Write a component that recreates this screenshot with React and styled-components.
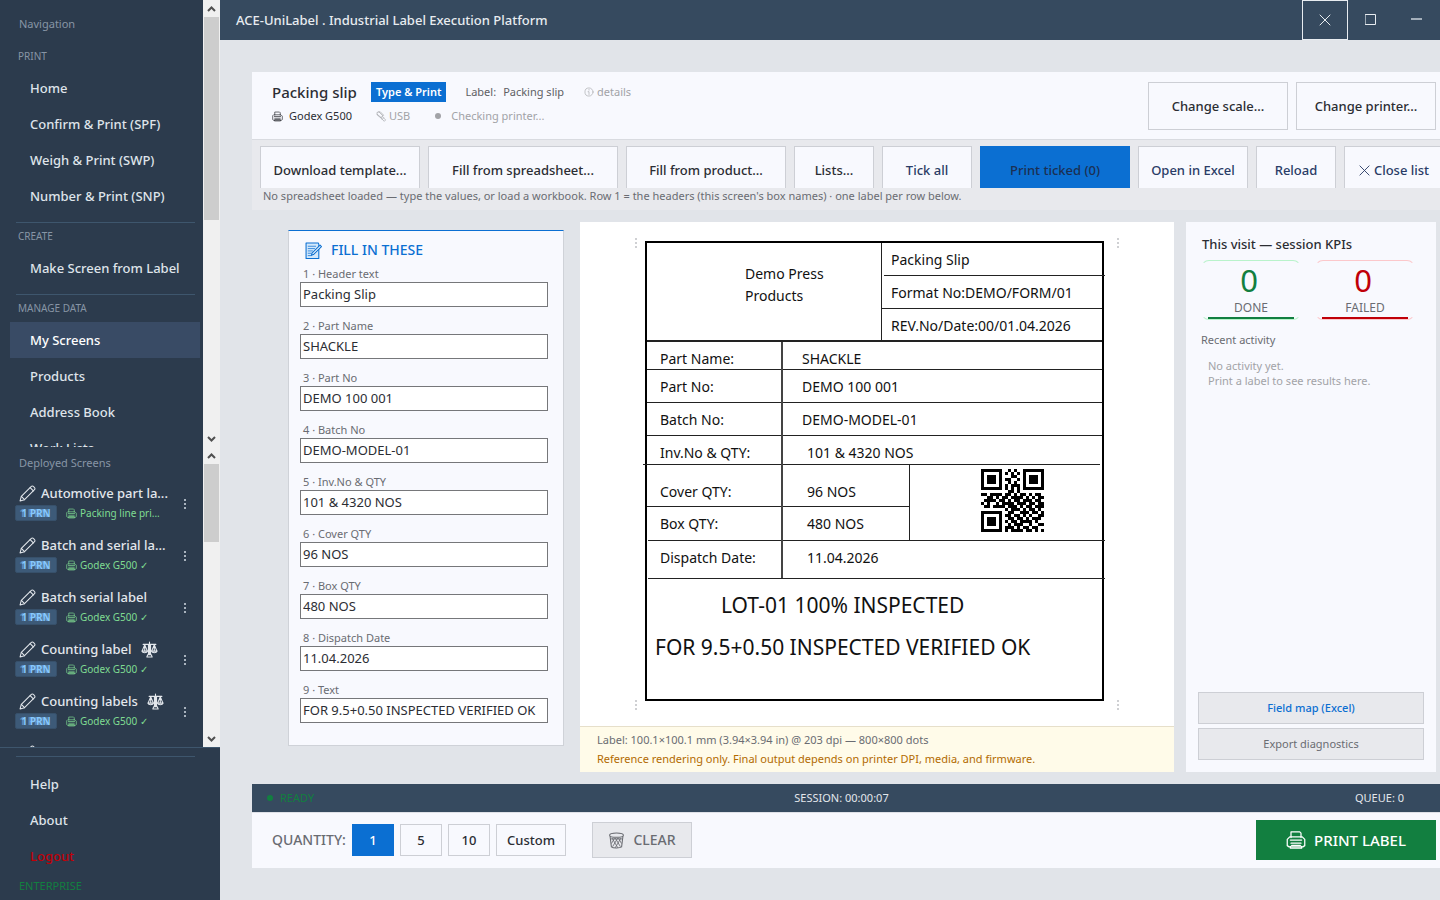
import React from "react";
import styled, { createGlobalStyle, css } from "styled-components";

const GlobalStyle = createGlobalStyle`
  * {
    box-sizing: border-box;
  }
  body {
    margin: 0;
    background: #e1e4e9;
    color: #2b2d33;
    font-family: "Noto Sans", "Open Sans", sans-serif;
    font-size: 11px;
    line-height: 16px;
  }
  button, input {
    font: inherit;
    color: inherit;
    margin: 0;
  }
  svg {
    display: block;
    flex: none;
  }
`

const Screen = styled.div`
  display: flex;
  height: 100vh;
  overflow: hidden;
`

/* ---------- sidebar ---------- */
const Sidebar = styled.aside`
  display: flex;
  flex-direction: column;
  flex: none;
  width: 220px;
  background: #2c3b4d;
  color: #e3e7ec;
`
const ScrollArea = styled.div`
  display: flex;
  min-height: 0;
  flex: ${props => props.$height ? `0 0 ${props.$height}` : "1 1 0"};
`
const ScrollContent = styled.div`
  flex: 1;
  min-width: 0;
  overflow: hidden;
`
const Track = styled.div`
  display: flex;
  flex-direction: column;
  flex: none;
  width: 17px;
  padding: 0 1px;
  background: #f0f0f0;
  color: #505050;
  svg {
    margin: 0 auto;
  }
`
const Thumb = styled.div`
  flex: 0 0 ${props => props.$size};
  background: #cdcdcd;
`
const TrackSpace = styled.div`
  flex: 1;
`
const PaneTitle = styled.div`
  padding: ${props => props.$first ? "16px 19px 16px" : "8px 19px 4px"};
  color: #8795a5;
`
const GroupTitle = styled.div`
  padding: 0 18px 6px;
  font-size: 10px;
  color: #8795a5;
`
const Divider = styled.hr`
  height: 1px;
  margin: ${props => props.$bottom ? "8px 25px 9px 16px" : "8px 8px 5px 16px"};
  border: 0;
  background: #3e566d;
`
const NavLink = styled.a`
  display: block;
  height: 36px;
  margin: 0 3px 0 10px;
  padding: 0 20px;
  line-height: 36px;
  font-size: 13px;
  font-weight: 500;
  white-space: nowrap;
  text-decoration: none;
  color: ${props => props.$danger ? "#c00008" : props.$active ? "#ffffff" : "#dfe4ea"};
  background: ${props => props.$active ? "#394b65" : "transparent"};
`
const SideFooter = styled.div`
  flex: none;
  height: 153px;
  border-top: 1px solid #3e566d;
`
const Edition = styled.div`
  padding: 4px 19px;
  color: #127f40;
`
const Deployed = styled.div`
  display: flex;
  align-items: flex-start;
  height: 52px;
  padding: 6px 8px 0 15px;
`
const DeployedMain = styled.div`
  flex: 1;
  min-width: 0;
`
const DeployedName = styled.div`
  display: flex;
  align-items: center;
  gap: 5px;
  height: 24px;
  padding-left: 4px;
  font-size: 13px;
  font-weight: 500;
  white-space: nowrap;
  svg:last-child:not(:first-child) {
    margin-left: 4px;
  }
`
const DeployedMeta = styled.div`
  display: flex;
  align-items: center;
  gap: 9px;
  font-size: 10px;
  color: #7fdb92;
  white-space: nowrap;
`
const Prn = styled.span`
  width: 42px;
  height: 16px;
  border: 1px solid #37506a;
  border-radius: 2px;
  background: #3d5a78;
  color: #86c8ff;
  font-weight: 700;
  line-height: 14px;
  text-align: center;
  text-shadow: -2px 0 rgba(134, 200, 255, 0.5);
`
const MetaPrinter = styled.span`
  display: flex;
  align-items: center;
  gap: 3px;
`
const MoreButton = styled.button`
  display: flex;
  margin-top: 13px;
  padding: 4px;
  border: 0;
  background: none;
  color: #a9b3be;
`

/* ---------- main ---------- */
const Main = styled.main`
  display: flex;
  flex-direction: column;
  flex: 1;
  min-width: 0;
`
const TitleBar = styled.header`
  display: flex;
  align-items: center;
  flex: none;
  height: 40px;
  padding-left: 16px;
  background: #364a5f;
  color: #e8ecf0;
  h1 {
    flex: 1;
    margin: 0;
    font-size: 13px;
    font-weight: 500;
  }
`
const WindowButton = styled.button`
  display: flex;
  align-items: center;
  justify-content: center;
  width: 46px;
  height: 40px;
  padding: 0;
  border: 1px solid ${props => props.$focused ? "#e8ecf0" : "transparent"};
  background: none;
`
const Work = styled.div`
  display: flex;
  flex-direction: column;
  flex: 1;
  min-height: 0;
  padding: 32px 0 32px 32px;
`
const ScreenHead = styled.section`
  display: flex;
  align-items: flex-start;
  justify-content: space-between;
  height: 68px;
  padding: 10px 4px 0 20px;
  border-bottom: 1px solid #d9dbe0;
  background: #f8f9fe;
`
const HeadRow = styled.div`
  display: flex;
  align-items: center;
  height: ${props => props.$tall ? "20px" : "28px"};
  color: #5e6064;
  h2 {
    width: 99px;
    margin: 0;
    font-size: 15px;
    font-weight: 500;
    color: #2b2d33;
    white-space: nowrap;
  }
`
const Tag = styled.span`
  height: 20px;
  padding: 0 5px;
  line-height: 20px;
  font-weight: 600;
  background: #0b6fd2;
  color: #ffffff;
`
const HeadText = styled.span`
  display: flex;
  align-items: center;
  gap: ${props => props.$gap || "4px"};
  margin-left: ${props => props.$left || "0"};
  color: ${props => props.$tone || "inherit"};
`
const Buttons = styled.div`
  display: flex;
  gap: ${props => props.$gap || "8px"};
`
const Button = styled.button`
  display: flex;
  align-items: center;
  justify-content: center;
  gap: ${props => props.$gap || "8px"};
  flex: none;
  width: ${props => props.$width};
  height: ${props => props.$height || "48px"};
  padding: 0;
  border: 1px solid #cdcfd5;
  background: #f8f9fe;
  font-size: 13px;
  font-weight: 500;
  white-space: nowrap;
  ${props => props.$navy && css`
    color: #2a3c66;
  `}
  ${props => props.$primary && css`
    border-color: #0b6fd2;
    background: #0b6fd2;
    color: ${props.$primary};
  `}
  ${props => props.$grey && css`
    background: #e8e9ed;
    color: ${props.$grey};
  `}
  ${props => props.$print && css`
    border-color: #127f40;
    background: #127f40;
    color: #ffffff;
  `}
  ${props => props.$size && css`
    font-size: ${props.$size};
  `}
  ${props => props.$plain && css`
    font-weight: 400;
  `}
`
const SheetBar = styled.section`
  flex: none;
  height: 70px;
  padding: 6px 0 0 8px;
  background: #e8e9ed;
  overflow: hidden;
  p {
    margin: 0 3px;
    color: #6a6c72;
  }
`
const SheetButtons = styled(Buttons)`
  height: 42px;
  overflow: hidden;
`
const Columns = styled.div`
  display: grid;
  grid-template-columns: 276px minmax(0, 1fr) 250px;
  flex: 1;
  min-height: 0;
  padding: 12px 4px 12px 36px;
`
const FormPanel = styled.form`
  align-self: start;
  margin-top: 8px;
  padding: 4px 15px 12px 11px;
  border: 1px solid #cfd2d8;
  border-top-color: #0b6fd2;
  background: #f8f9fe;
  h3 {
    display: flex;
    align-items: center;
    gap: 9px;
    height: 30px;
    margin: 0 0 0 5px;
    font-size: 14px;
    font-weight: 500;
    color: #0b6fd2;
  }
`
const Field = styled.div`
  height: 52px;
  label {
    display: block;
    height: 17px;
    padding-left: 3px;
    line-height: 18px;
    color: #6a6c72;
  }
  input {
    display: block;
    width: 100%;
    height: 25px;
    padding: 0 2px 2px;
    border: 1px solid #76777a;
    background: #ffffff;
    color: #2b2d33;
    font-size: 13px;
  }
`
const Preview = styled.section`
  display: flex;
  flex-direction: column;
  margin: 0 12px 0 16px;
  background: #ffffff;
`
const Canvas = styled.div`
  display: grid;
  grid-template-columns: 12px 459px 17px;
  justify-content: center;
  align-content: center;
  flex: 1;
`
const Crop = styled.i`
  width: 2px;
  height: 10px;
  margin: 0 2px;
  align-self: ${props => props.$end ? "end" : "start"};
  justify-self: ${props => props.$right ? "end" : "start"};
  grid-column: ${props => props.$right ? 3 : 1};
  grid-row: 1;
  border-left: 2px dotted #cfd0d3;
`
const Note = styled.div`
  flex: none;
  height: 46px;
  padding: 3px 17px;
  border-top: 1px solid #e6dfca;
  background: #fffbe9;
  line-height: 19px;
  color: #6a6c72;
  div:last-child {
    color: #b26a00;
  }
`

/* ---------- printed label ---------- */
const Label = styled.div`
  grid-column: 2;
  grid-row: 1;
  height: 460px;
  margin: 3px 0 9px;
  border: 2px solid #000000;
  color: #111111;
  font-size: 14px;
  white-space: nowrap;
`
const LabelHead = styled.div`
  display: grid;
  grid-template-columns: 235px 1fr;
  height: 99px;
  border-bottom: 2px solid #222222;
`
const Company = styled.div`
  padding: 20px 0 0 98px;
  border-right: 1px solid #222222;
  line-height: 22px;
`
const HeadLine = styled.div`
  height: 32px;
  padding-left: 9px;
  line-height: 34px;
`
/* some rules of the template run past the frame */
const Rule = styled.div`
  height: 1px;
  margin: ${props => props.$margin || "0"};
  background: #222222;
`
const LabelRow = styled.div`
  display: grid;
  grid-template-columns: 136px 1fr;
  height: ${props => props.$height};
  line-height: ${props => props.$line || "34px"};
  > :first-child {
    padding-left: 13px;
    border-right: 2px solid #444444;
  }
  > :last-child {
    padding-left: ${props => props.$indent || "19px"};
  }
`
const QtyBlock = styled.div`
  display: grid;
  grid-template-columns: 262px 1fr;
  height: 75px;
`
const QrCell = styled.div`
  display: flex;
  justify-content: center;
  padding: 4px 0 0 13px;
  border-left: 1px solid #222222;
`
const Verdict = styled.div`
  padding-left: ${props => props.$left};
  padding-top: 11px;
  font-size: 21px;
  line-height: 31px;
`

/* ---------- session panel ---------- */
const Session = styled.aside`
  display: flex;
  flex-direction: column;
  padding: 12px 12px;
  background: #f8f9fe;
  h3 {
    margin: 0 4px;
    font-size: 13px;
    font-weight: 500;
    line-height: 20px;
  }
`
const Kpis = styled.div`
  display: flex;
  gap: 14px;
  margin: 6px 3px 0;
`
const Kpi = styled.div`
  display: flex;
  flex-direction: column;
  align-items: center;
  width: 100px;
  height: 60px;
  border: 1px solid ${props => props.$edge};
  border-left-color: transparent;
  border-right-color: transparent;
  border-radius: 8px;
  font-size: 12px;
  color: #6a6c72;
  strong {
    padding-right: 4px;
    font-size: 31px;
    font-weight: 400;
    line-height: 39px;
    color: ${props => props.$tone};
  }
  &::after {
    content: "";
    flex: none;
    width: 86px;
    height: 2px;
    margin-top: 1px;
    background: ${props => props.$tone};
  }
`
const Recent = styled.h4`
  margin: 12px 3px 10px;
  font-weight: 400;
  font-size: 11px;
  color: #6a6c72;
`
const Empty = styled.p`
  flex: 1;
  margin: 0 10px;
  line-height: 15px;
  color: #a2a3a7;
`
const Stack = styled.div`
  display: grid;
  gap: 4px;
`

/* ---------- bottom bars ---------- */
const StatusBar = styled.section`
  display: grid;
  grid-template-columns: 1fr auto 1fr;
  align-items: center;
  flex: none;
  height: 28px;
  padding: 0 24px 0 15px;
  background: #364a5f;
  color: #e3e7ec;
  > :first-child {
    display: flex;
    align-items: center;
    gap: 7px;
    color: #127f40;
  }
  > :last-child {
    padding-right: 12px;
    text-align: right;
  }
`
const Dot = styled.i`
  width: 6px;
  height: 6px;
  border-radius: 50%;
  background: currentColor;
`
const ActionBar = styled.section`
  display: flex;
  align-items: center;
  flex: none;
  height: 56px;
  padding: 0 4px 1px 20px;
  border-top: 1px solid #dfe1e7;
  background: #f8f9fe;
`
const QtyLabel = styled.span`
  width: 80px;
  font-size: 14px;
  font-weight: 500;
  color: #6a6c72;
  white-space: nowrap;
`
const ActionSpace = styled.div`
  flex: ${props => props.$width ? `0 0 ${props.$width}` : 1};
`

/* ---------- icons ---------- */
const Icon = ({ size = 16, box = 16, children, ...rest }) => (
    <svg width={size} height={size} viewBox={`0 0 ${box} ${box}`} fill="none" stroke="currentColor"
         strokeLinecap="round" strokeLinejoin="round" aria-hidden="true" {...rest}>{children}</svg>
)
const PencilIcon = () => (
    <Icon size={17}>
        <path d="M1 15l1.200-4.200L11.600 1.400a1.300 1.300 0 0 1 1.900 0l1.100 1.100a1.300 1.300 0 0 1 0 1.900L5.200 13.800z"/>
        <path d="M2.200 10.800l3 3M10.500 2.500l3 3"/>
    </Icon>
)
const PrinterIcon = ({ size = 12 }) => (
    <Icon size={size}>
        <path d="M4 6V1.500h7l1 1V6M3 5.500h10l2 2v5l-1.500 1h-11L1 12.500v-5z"/>
        <path d="M4 10.500h8M3.500 8h9M3.500 13v1.500h9V13M4.500 12.300h7"/>
    </Icon>
)
const ScalesIcon = () => (
    <Icon size={17}>
        <path d="M8 1v12M7 3v10h2V3zM2 3.200h12M5.500 15h5l-.8-2H6.300zM3.500 3.500L1 9.500h5zM12.500 3.500L10 9.500h5zM3.500 3.500v6M12.500 3.500v6"/>
        <path d="M1 9.500c.3 2 4.700 2 5 0M10 9.500c.3 2 4.700 2 5 0"/>
    </Icon>
)
const TrashIcon = () => (
    <Icon size={17}>
        <ellipse cx="8" cy="3" rx="6.500" ry="2"/>
        <path d="M2 4.500l1.200 9.500c1.500 1.300 8 1.300 9.600 0L14 4.500"/>
        <path d="M4 6l5 8.500M7 6l4.500 7.500M10 6l2.500 4.500M12 6l-5 8.500M9 6l-4.500 7.500M6 6l-2.500 4.500M3 6.500h10" strokeWidth=".8"/>
    </Icon>
)
const MemoIcon = () => (
    <Icon size={17}>
        <path d="M12.500 1H1v14.500h12V2z" fill="#d3e8fb"/>
        <path d="M3 4h7M3 6.200h6M3 8.400h4M3 10.600h3M3 12.800h3" strokeWidth=".7"/>
        <path d="M6 12.500l.6-2 7.600-7.500 1.300 1.300-7.600 7.500z" fill="#ffffff"/>
    </Icon>
)
const PlugIcon = () => (
    <Icon size={11}>
        <path d="M2 2l4-1 5 5-4 4-5-4zM4 1l6 6M2 5l6 5M9 8l5 5-2 2-5-5M11 10l-2 2"/>
    </Icon>
)
const InfoIcon = () => (
    <Icon size={10}><circle cx="8" cy="8" r="6.500"/><path d="M8 4v1M6.500 7.500H8V12"/></Icon>
)
const CloseIcon = ({ size = 12 }) => (
    <Icon size={size} box={12}><path d="M1 1l10 10M11 1L1 11"/></Icon>
)
const DotsIcon = () => (
    <Icon size={12} box={12} fill="currentColor" stroke="none">
        <path d="M5 1h2v2H5zM5 5h2v2H5zM5 9h2v2H5z"/>
    </Icon>
)
const Chevron = ({ down }) => (
    <svg width="9" height="17" viewBox="0 0 9 17" fill="none" stroke="currentColor" strokeWidth="2" aria-hidden="true">
        <path d={down ? "M1 7l3.500 3.500L8 7" : "M1 11l3.500-3.500L8 11"}/>
    </svg>
)

const QR_ROWS = [
    "111111100101001111111",
    "100000101010101000001",
    "101110100011001011101",
    "101110101100101011101",
    "101110100101001011101",
    "100000101011101000001",
    "111111101010101111111",
    "000000000110100000000",
    "110111101101011010110",
    "001101011011110101011",
    "011110110101101110110",
    "101001011110111011011",
    "011011110111010110111",
    "000000001011101011010",
    "111111100110011101101",
    "100000101101101010011",
    "101110100110110101110",
    "101110101011011110100",
    "101110100101110010011",
    "100000101110101101100",
    "111111101011110110101",
]
const QrCode = () => (
    <svg width="63" height="63" viewBox="0 0 21 21" shapeRendering="crispEdges" role="img" aria-label="QR code">
        <path fill="#000000" d={QR_ROWS.map((row, y) =>
            [...row].map((bit, x) => bit === "1" ? `M${x} ${y}h1v1h-1z` : "").join("")).join("")}/>
    </svg>
)

const FIELDS = [
    ["Header text", "Packing Slip"],
    ["Part Name", "SHACKLE"],
    ["Part No", "DEMO 100 001"],
    ["Batch No", "DEMO-MODEL-01"],
    ["Inv.No & QTY", "101 & 4320 NOS"],
    ["Cover QTY", "96 NOS"],
    ["Box QTY", "480 NOS"],
    ["Dispatch Date", "11.04.2026"],
    ["Text", "FOR 9.5+0.50 INSPECTED VERIFIED OK"],
]
const DEPLOYED = [
    { name: "Automotive part la...", printer: "Packing line pri..." },
    { name: "Batch and serial la...", printer: "Godex G500 ✓" },
    { name: "Batch serial label", printer: "Godex G500 ✓" },
    { name: "Counting label", printer: "Godex G500 ✓", scale: true },
    { name: "Counting labels", printer: "Godex G500 ✓", scale: true },
    {},
]

function ScrollTrack({ thumb }) {
    return (
        <Track>
            <Chevron/>
            <Thumb $size={thumb}/>
            <TrackSpace/>
            <Chevron down/>
        </Track>
    )
}

function DeployedItem({ item }) {
    return (
        <Deployed>
            <DeployedMain>
                <DeployedName>
                    <PencilIcon/>
                    {item.name && <span>{item.name}</span>}
                    {item.scale && <ScalesIcon/>}
                </DeployedName>
                {item.printer && (
                    <DeployedMeta>
                        <Prn>1 PRN</Prn>
                        <MetaPrinter><PrinterIcon size={11}/>{item.printer}</MetaPrinter>
                    </DeployedMeta>
                )}
            </DeployedMain>
            <MoreButton aria-label="More"><DotsIcon/></MoreButton>
        </Deployed>
    )
}

function SideNav() {
    return (
        <Sidebar>
            <ScrollArea>
                <ScrollContent as="nav">
                    <PaneTitle $first>Navigation</PaneTitle>
                    <GroupTitle>PRINT</GroupTitle>
                    <NavLink href="#home">Home</NavLink>
                    <NavLink href="#spf">Confirm &amp; Print (SPF)</NavLink>
                    <NavLink href="#swp">Weigh &amp; Print (SWP)</NavLink>
                    <NavLink href="#snp">Number &amp; Print (SNP)</NavLink>
                    <Divider/>
                    <GroupTitle>CREATE</GroupTitle>
                    <NavLink href="#make">Make Screen from Label</NavLink>
                    <Divider/>
                    <GroupTitle>MANAGE DATA</GroupTitle>
                    <NavLink href="#screens" $active>My Screens</NavLink>
                    <NavLink href="#products">Products</NavLink>
                    <NavLink href="#addresses">Address Book</NavLink>
                    <NavLink href="#work">Work Lists</NavLink>
                </ScrollContent>
                <ScrollTrack thumb="203px"/>
            </ScrollArea>
            <ScrollArea $height="300px">
                <ScrollContent>
                    <PaneTitle>Deployed Screens</PaneTitle>
                    {DEPLOYED.map((item, i) => <DeployedItem key={i} item={item}/>)}
                </ScrollContent>
                <ScrollTrack thumb="78px"/>
            </ScrollArea>
            <SideFooter>
                <Divider $bottom/>
                <NavLink href="#help">Help</NavLink>
                <NavLink href="#about">About</NavLink>
                <NavLink href="#logout" $danger>Logout</NavLink>
                <Edition>ENTERPRISE</Edition>
            </SideFooter>
        </Sidebar>
    )
}

function PrintedLabel() {
    return (
        <Label>
            <LabelHead>
                <Company>Demo Press<br/>Products</Company>
                <div>
                    <HeadLine>Packing Slip</HeadLine>
                    <Rule $margin="0 -3px 0 2px"/>
                    <HeadLine>Format No:DEMO/FORM/01</HeadLine>
                    <Rule/>
                    <HeadLine>REV.No/Date:00/01.04.2026</HeadLine>
                </div>
            </LabelHead>
            <LabelRow $height="27px"><span>Part Name:</span><span>SHACKLE</span></LabelRow>
            <Rule/>
            <LabelRow $height="32px"><span>Part No:</span><span>DEMO 100 001</span></LabelRow>
            <Rule/>
            <LabelRow $height="32px"><span>Batch No:</span><span>DEMO-MODEL-01</span></LabelRow>
            <Rule/>
            <LabelRow $height="28px" $indent="24px"><span>Inv.No &amp; QTY:</span><span>101 &amp; 4320 NOS</span></LabelRow>
            <Rule $margin="0 2px 0 -4px"/>
            <QtyBlock>
                <div>
                    <LabelRow $height="41px" $line="53px" $indent="24px"><span>Cover QTY:</span><span>96 NOS</span></LabelRow>
                    <Rule/>
                    <LabelRow $height="33px" $indent="24px"><span>Box QTY:</span><span>480 NOS</span></LabelRow>
                </div>
                <QrCell><QrCode/></QrCell>
            </QtyBlock>
            <Rule $margin="0 -3px 0 1px"/>
            <LabelRow $height="37px" $indent="24px"><span>Dispatch Date:</span><span>11.04.2026</span></LabelRow>
            <Rule $margin="0 -3px 0 1px"/>
            <Verdict $left="74px">LOT-01 100% INSPECTED</Verdict>
            <Verdict $left="8px">FOR 9.5+0.50 INSPECTED VERIFIED OK</Verdict>
        </Label>
    )
}

function App() {
    return (
        <Screen>
            <GlobalStyle/>
            <SideNav/>
            <Main>
                <TitleBar>
                    <h1>ACE-UniLabel . Industrial Label Execution Platform</h1>
                    <WindowButton $focused aria-label="Close"><CloseIcon/></WindowButton>
                    <WindowButton aria-label="Maximize">
                        <Icon size={12} box={12} strokeLinejoin="miter"><path d="M.5 .5h10v10H.5z"/></Icon>
                    </WindowButton>
                    <WindowButton aria-label="Minimize">
                        <Icon size={12} box={12} stroke="#a4afba" strokeWidth="2" strokeLinecap="butt"><path d="M0 5h11"/></Icon>
                    </WindowButton>
                </TitleBar>
                <Work>
                    <ScreenHead>
                        <div>
                            <HeadRow $tall>
                                <h2>Packing slip</h2>
                                <Tag>Type &amp; Print</Tag>
                                <HeadText $left="19px" $gap="7px"><span>Label:</span><span>Packing slip</span></HeadText>
                                <HeadText $left="20px" $gap="3px" $tone="#a2a3a7"><InfoIcon/>details</HeadText>
                            </HeadRow>
                            <HeadRow>
                                <HeadText $gap="6px" $tone="#2b2d33"><PrinterIcon size={11}/>Godex G500</HeadText>
                                <HeadText $left="24px" $gap="2px" $tone="#a2a3a7"><PlugIcon/>USB</HeadText>
                                <HeadText $left="25px" $gap="10px" $tone="#a2a3a7"><Dot/>Checking printer...</HeadText>
                            </HeadRow>
                        </div>
                        <Buttons>
                            <Button $width="140px">Change scale...</Button>
                            <Button $width="140px">Change printer...</Button>
                        </Buttons>
                    </ScreenHead>
                    <SheetBar>
                        <SheetButtons>
                            <Button $width="160px">Download template...</Button>
                            <Button $width="190px">Fill from spreadsheet...</Button>
                            <Button $width="160px">Fill from product...</Button>
                            <Button $width="80px">Lists...</Button>
                            <Button $width="90px" $navy>Tick all</Button>
                            <Button $width="150px" $primary="#1b2f52">Print ticked (0)</Button>
                            <Button $width="110px" $navy>Open in Excel</Button>
                            <Button $width="80px" $navy>Reload</Button>
                            <Button $width="100px" $navy $gap="4px"><CloseIcon size={11}/>Close list</Button>
                        </SheetButtons>
                        <p>No spreadsheet loaded — type the values, or load a workbook. Row 1 = the headers (this screen's box names) · one label per row below.</p>
                    </SheetBar>
                    <Columns>
                        <FormPanel>
                            <h3><MemoIcon/>FILL IN THESE</h3>
                            {FIELDS.map(([name, value], i) => (
                                <Field key={name}>
                                    <label htmlFor={`field-${i}`}>{i + 1} · {name}</label>
                                    <input id={`field-${i}`} type="text" defaultValue={value}/>
                                </Field>
                            ))}
                        </FormPanel>
                        <Preview>
                            <Canvas>
                                <Crop/>
                                <Crop $end/>
                                <PrintedLabel/>
                                <Crop $right/>
                                <Crop $right $end/>
                            </Canvas>
                            <Note>
                                <div>Label: 100.1×100.1 mm (3.94×3.94 in) @ 203 dpi — 800×800 dots</div>
                                <div>Reference rendering only. Final output depends on printer DPI, media, and firmware.</div>
                            </Note>
                        </Preview>
                        <Session>
                            <h3>This visit — session KPIs</h3>
                            <Kpis>
                                <Kpi $tone="#127f40" $edge="#b9f3cb"><strong>0</strong>DONE</Kpi>
                                <Kpi $tone="#c00008" $edge="#fcc8cb"><strong>0</strong>FAILED</Kpi>
                            </Kpis>
                            <Recent>Recent activity</Recent>
                            <Empty>No activity yet.<br/>Print a label to see results here.</Empty>
                            <Stack>
                                <Button $height="32px" $size="11px" $grey="#0b6fd2">Field map (Excel)</Button>
                                <Button $height="32px" $size="11px" $grey="#6a6c72" $plain>Export diagnostics</Button>
                            </Stack>
                        </Session>
                    </Columns>
                    <StatusBar>
                        <span><Dot/>READY</span>
                        <span>SESSION: 00:00:07</span>
                        <span>QUEUE: 0</span>
                    </StatusBar>
                    <ActionBar>
                        <QtyLabel>QUANTITY:</QtyLabel>
                        <Buttons $gap="6px">
                            <Button $width="42px" $height="32px" $primary="#ffffff">1</Button>
                            <Button $width="42px" $height="32px">5</Button>
                            <Button $width="42px" $height="32px">10</Button>
                            <Button $width="70px" $height="32px">Custom</Button>
                        </Buttons>
                        <ActionSpace $width="26px"/>
                        <Button $width="100px" $height="36px" $size="14px" $grey="#6a6c72"><TrashIcon/>CLEAR</Button>
                        <ActionSpace/>
                        <Button $width="180px" $height="40px" $size="15px" $print><PrinterIcon size={20}/>PRINT LABEL</Button>
                    </ActionBar>
                </Work>
            </Main>
        </Screen>
    )
}

export default App;
